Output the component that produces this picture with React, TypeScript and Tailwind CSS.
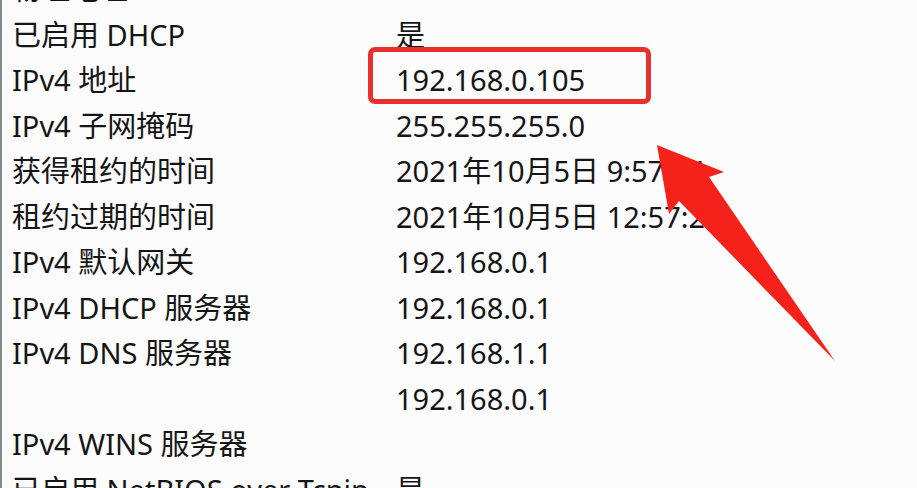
import React from "react";

interface Row {
  label: string;
  value?: string;
  highlight?: boolean;
}

const rows: Row[] = [
  { label: "物理地址" },
  { label: "已启用 DHCP", value: "是" },
  { label: "IPv4 地址", value: "192.168.0.105", highlight: true },
  { label: "IPv4 子网掩码", value: "255.255.255.0" },
  { label: "获得租约的时间", value: "2021年10月5日 9:57:24" },
  { label: "租约过期的时间", value: "2021年10月5日 12:57:24" },
  { label: "IPv4 默认网关", value: "192.168.0.1" },
  { label: "IPv4 DHCP 服务器", value: "192.168.0.1" },
  { label: "IPv4 DNS 服务器", value: "192.168.1.1" },
  { label: "", value: "192.168.0.1" },
  { label: "IPv4 WINS 服务器" },
  { label: "已启用 NetBIOS over Tcpip", value: "是" },
];

export default function App() {
  return (
    <div
      className="relative w-[917px] h-[488px] overflow-hidden bg-[#fcfcfc] border-l-2 border-[#7f8c8c] text-[#151515]"
      style={{ fontFamily: '"Noto Sans", "Noto Sans CJK SC", sans-serif' }}
    >
      <div className="flex flex-col mt-[-34px]">
        {rows.map((row, i) => (
          <div key={i} className="relative flex items-center h-[45.5px] text-[29px] leading-none">
            <div className="w-[394px] pl-[10px] whitespace-nowrap">{row.label}</div>
            <div className="whitespace-nowrap">{row.value}</div>
            {row.highlight && (
              <div className="absolute left-[366px] top-[-10px] w-[283px] h-[57px] rounded-[7px] border-[5px] border-[#e8302c]" />
            )}
          </div>
        ))}
      </div>

      {/* red arrow pointing at the address */}
      <svg
        className="absolute left-0 top-0"
        width="917"
        height="488"
        viewBox="0 0 917 488"
      >
        <polygon
          points="655,145 722,172 707,177 833,361 677,201 667,214"
          fill="#f5211b"
        />
      </svg>
    </div>
  );
}
